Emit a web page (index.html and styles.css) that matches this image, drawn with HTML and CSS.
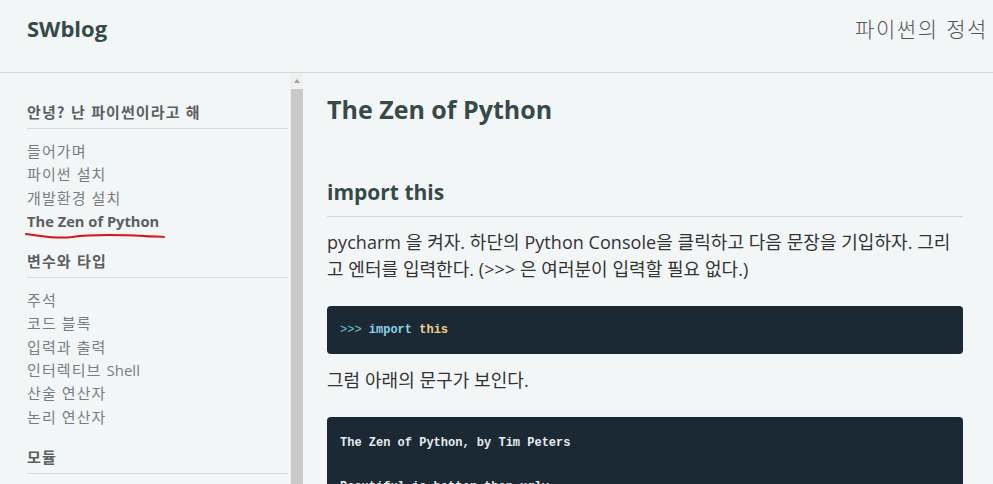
FILE: index.html
```html
<!DOCTYPE html>
<html lang="ko">
<head>
<meta charset="utf-8">
<title>SWblog - The Zen of Python</title>
<link rel="stylesheet" href="styles.css">
</head>
<body>
<header class="topbar">
  <div class="brand">SWblog</div>
  <div class="book-title">파이썬의 정석</div>
</header>
<div class="layout">
  <nav class="sidebar">
    <div class="nav-section">
      <div class="nav-heading">안녕? 난 파이썬이라고 해</div>
      <ul class="nav-list">
        <li>들어가며</li>
        <li>파이썬 설치</li>
        <li>개발환경 설치</li>
        <li class="active">The Zen of Python
          <svg class="scribble" width="144" height="10" viewBox="0 0 144 10"><path d="M2 3 C 20 5, 30 8, 48 6 C 70 3, 100 4, 120 5 C 130 6, 136 5, 140 6" fill="none" stroke="#d8141a" stroke-width="2" stroke-linecap="round"/></svg>
        </li>
      </ul>
    </div>
    <div class="nav-section">
      <div class="nav-heading">변수와 타입</div>
      <ul class="nav-list">
        <li>주석</li>
        <li>코드 블록</li>
        <li>입력과 출력</li>
        <li>인터렉티브 <span class="latin">Shell</span></li>
        <li>산술 연산자</li>
        <li>논리 연산자</li>
      </ul>
    </div>
    <div class="nav-section">
      <div class="nav-heading">모듈</div>
    </div>
  </nav>
  <div class="scrollbar">
    <div class="scroll-arrow"></div>
    <div class="scroll-thumb"></div>
  </div>
  <main class="content">
    <h1>The Zen of Python</h1>
    <h2>import this</h2>
    <p>pycharm 을 켜자. 하단의 Python Console을 클릭하고 다음 문장을 기입하자. 그리고 엔터를 입력한다. (&gt;&gt;&gt; 은 여러분이 입력할 필요 없다.)</p>
    <pre class="code"><span class="prompt">&gt;&gt;&gt;</span> <span class="kw">import</span> <span class="mod">this</span></pre>
    <p>그럼 아래의 문구가 보인다.</p>
    <pre class="code code-out">The Zen of Python, by Tim Peters

Beautiful is better than ugly.</pre>
  </main>
</div>
</body>
</html>
```
FILE: styles.css
```css
* { box-sizing: border-box; }
html, body { height: 100%; }
body {
  margin: 0;
  background: #f2f6f7;
  font-family: "Open Sans", "Noto Sans CJK KR", sans-serif;
  color: #333;
  overflow: hidden;
}
.topbar {
  height: 73px;
  border-bottom: 1px solid #d3d9da;
  display: flex;
  justify-content: space-between;
  align-items: flex-start;
  padding: 13px 5px 0 27px;
}
.brand {
  font-size: 22px;
  font-weight: 700;
  color: #364a48;
  line-height: 30px;
}
.book-title {
  font-size: 21px;
  letter-spacing: 1.6px;
  color: #555;
  line-height: 30px;
  font-family: "Noto Sans CJK KR", sans-serif;
  font-weight: 300;
}
.layout {
  display: flex;
  height: calc(100% - 73px);
}
.sidebar {
  width: 290px;
  flex: none;
  padding: 28px 2px 0 27px;
}
.nav-section { margin-bottom: 17px; }
.nav-heading {
  font-size: 15px;
  font-weight: 700;
  letter-spacing: 1.1px;
  color: #5b5f60;
  line-height: 22px;
  padding-bottom: 5px;
  border-bottom: 1px solid #d6dcdd;
  font-family: "Noto Sans CJK KR", sans-serif;
}
.nav-list {
  list-style: none;
  margin: 0;
  padding: 11px 0 0;
}
.nav-list li {
  font-size: 15px;
  line-height: 23.3px;
  letter-spacing: 1.1px;
  color: #7a7d7e;
  position: relative;
}
.nav-list .latin { letter-spacing: 0; }
.nav-list li.active {
  font-weight: 700;
  letter-spacing: 0;
  font-size: 14.7px;
  color: #5b5f60;
}
.scribble {
  position: absolute;
  left: -3px;
  top: 21px;
}
.scrollbar {
  width: 13px;
  flex: none;
  background: #f0f0f0;
  display: flex;
  flex-direction: column;
  align-items: center;
  padding-top: 6px;
}
.scroll-arrow {
  width: 0;
  height: 0;
  border-left: 3px solid transparent;
  border-right: 3px solid transparent;
  border-bottom: 4px solid #a3a3a3;
  margin-bottom: 6px;
}
.scroll-thumb {
  width: 12px;
  flex: 1;
  background: #c8c8c8;
}
.content {
  flex: 1;
  padding: 20px 30px 0 24px;
  min-width: 0;
}
h1 {
  margin: 0 0 53px;
  font-size: 25px;
  font-weight: 700;
  color: #364a48;
  line-height: 32px;
}
h2 {
  margin: 0 0 12px;
  font-size: 21px;
  font-weight: 700;
  color: #364a48;
  line-height: 28px;
  padding-bottom: 10px;
  border-bottom: 1px solid #d3d9da;
}
p {
  margin: 0;
  font-size: 18px;
  letter-spacing: 0.05px;
  line-height: 27px;
  color: #333;
}
.code {
  margin: 23px 0 13px;
  background: #1b2934;
  border-radius: 4px;
  padding: 16px 13px;
  font-family: "Liberation Mono", monospace;
  font-size: 12px;
  line-height: 16px;
  color: #e8ecee;
  font-weight: 700;
}
.code-out { line-height: 22px; padding-top: 15px; margin-top: 23px; }
.prompt { color: #6cc4d6; font-weight: 400; }
.kw { color: #8ad3ea; }
.mod { color: #f3d28c; }
```
